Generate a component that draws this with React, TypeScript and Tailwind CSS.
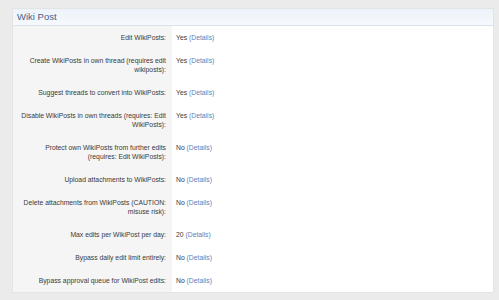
const rows: { label: string; value: string }[] = [
  { label: "Edit WikiPosts:", value: "Yes" },
  { label: "Create WikiPosts in own thread (requires edit wikiposts):", value: "Yes" },
  { label: "Suggest threads to convert into WikiPosts:", value: "Yes" },
  { label: "Disable WikiPosts in own threads (requires: Edit WikiPosts):", value: "Yes" },
  { label: "Protect own WikiPosts from further edits (requires: Edit WikiPosts):", value: "No" },
  { label: "Upload attachments to WikiPosts:", value: "No" },
  { label: "Delete attachments from WikiPosts (CAUTION: misuse risk):", value: "No" },
  { label: "Max edits per WikiPost per day:", value: "20" },
  { label: "Bypass daily edit limit entirely:", value: "No" },
  { label: "Bypass approval queue for WikiPost edits:", value: "No" },
];

const App = () => {
  return (
    <div
      className="w-[499px] h-[300px] bg-[#ebebeb] pt-[8px] pl-[12px] pr-[5px]"
      style={{ fontFamily: '"Liberation Sans", Arial, sans-serif' }}
    >
      <div className="bg-white border border-[#e4e4e4] overflow-hidden">
        {/* Header */}
        <div className="h-[17px] flex items-center pl-[4px] bg-gradient-to-b from-[#edf3fa] to-[#f6f9fd] border-b border-[#d9e3ee]">
          <span className="text-[9.5px] text-[#47608a]">Wiki Post</span>
        </div>

        {/* Permissions */}
        {rows.map((row) => (
          <div key={row.label} className="flex text-[6.8px] leading-[9px] text-[#3a3a3a]">
            <div className="w-[159px] shrink-0 bg-[#f5f5f5] pl-[8px] pr-[6px] py-[7px] text-right">
              {row.label}
            </div>
            <div className="flex-1 pl-[4px] py-[7px]">
              {row.value} <span className="text-[#5b82b8]">(Details)</span>
            </div>
          </div>
        ))}
      </div>
    </div>
  );
};

export default App;
